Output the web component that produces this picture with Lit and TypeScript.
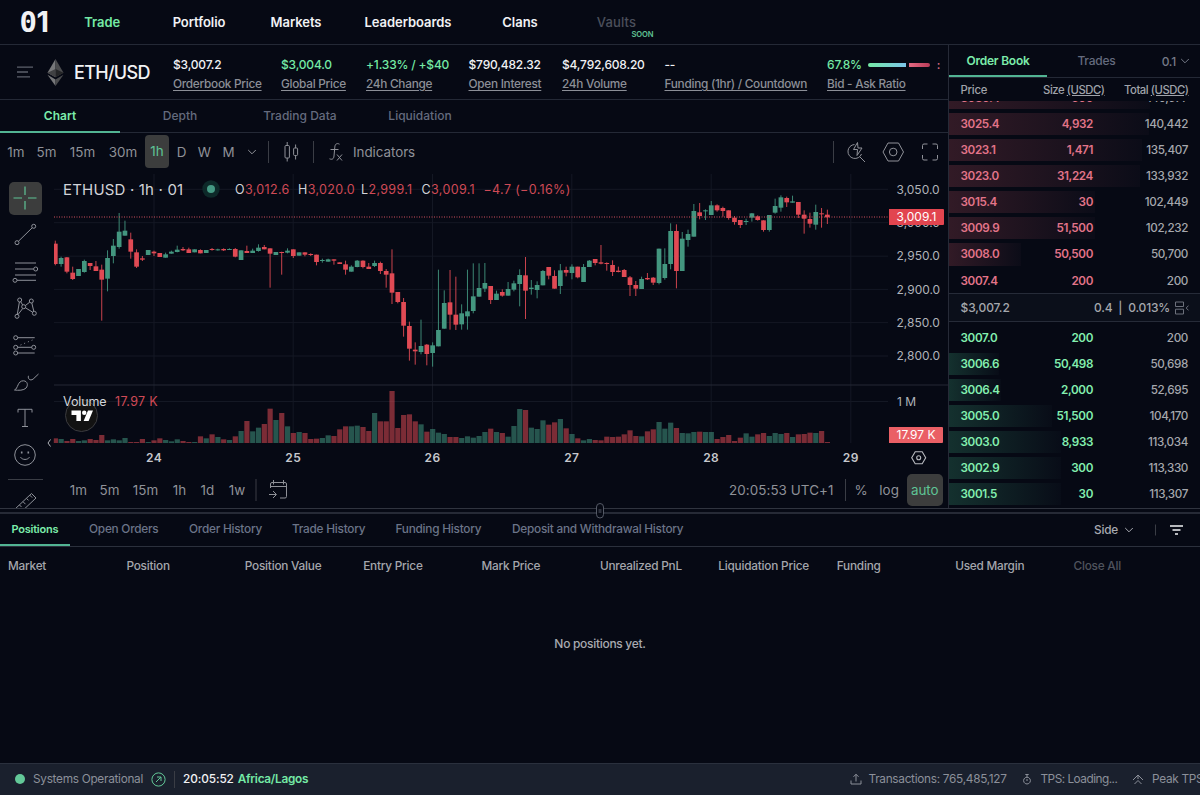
import { css, html, LitElement, svg } from 'lit';
import { customElement, property } from 'lit/decorators.js';
import { classMap } from 'lit/directives/class-map.js';
import { styleMap } from 'lit/directives/style-map.js';

// direction, body top, body bottom, high, low, volume - in thirds of a pixel
type Candle = [string, number, number, number, number, number];

const CANDLES: Candle[] = [
  ['r', 221, 282, 212, 286, 14], ['g', 264, 282, 260, 290, 12], ['r', 262, 305, 261, 310, 6],
  ['r', 308, 327, 290, 330, 12], ['g', 297, 318, 297, 318, 6], ['g', 273, 306, 269, 308, 8],
  ['r', 279, 288, 279, 300, 12], ['r', 289, 303, 273, 303, 9], ['r', 299, 329, 284, 452, 24],
  ['g', 264, 326, 241, 364, 8], ['g', 227, 258, 207, 280, 11], ['g', 185, 231, 129, 236, 8],
  ['g', 182, 197, 152, 197, 15], ['r', 208, 245, 188, 266, 3], ['r', 247, 290, 238, 294, 3],
  ['r', 265, 269, 258, 273, 12], ['g', 240, 255, 240, 255, 3], ['r', 245, 250, 242, 258, 8],
  ['r', 249, 261, 249, 261, 14], ['g', 253, 263, 248, 263, 9], ['g', 245, 251, 242, 251, 5],
  ['g', 239, 246, 227, 247, 11], ['r', 237, 241, 231, 243, 6], ['r', 238, 249, 233, 249, 3],
  ['g', 238, 247, 238, 247, 3], ['r', 240, 250, 238, 250, 20], ['g', 240, 249, 240, 249, 14],
  ['r', 237, 240, 234, 242, 26], ['g', 238, 241, 236, 242, 18], ['r', 237, 241, 235, 243, 11],
  ['g', 237, 240, 235, 240, 9], ['r', 237, 260, 234, 262, 20], ['g', 241, 270, 241, 270, 36],
  ['r', 243, 249, 227, 249, 66], ['g', 242, 249, 236, 249, 35], ['g', 233, 243, 223, 245, 46],
  ['r', 231, 238, 225, 238, 57], ['r', 235, 251, 235, 353, 103], ['g', 246, 255, 246, 255, 69],
  ['r', 246, 249, 245, 314, 90], ['g', 242, 248, 235, 250, 50], ['r', 238, 258, 238, 264, 30],
  ['g', 247, 257, 247, 257, 33], ['r', 247, 254, 247, 259, 30], ['r', 252, 255, 250, 258, 12],
  ['r', 254, 276, 254, 286, 13], ['g', 270, 273, 266, 278, 15], ['g', 268, 275, 266, 275, 23],
  ['r', 268, 272, 268, 284, 21], ['r', 277, 282, 277, 282, 41], ['r', 283, 299, 272, 314, 50],
  ['g', 290, 305, 286, 305, 50], ['g', 272, 291, 270, 292, 52], ['r', 272, 291, 271, 295, 48],
  ['r', 290, 297, 279, 297, 36], ['g', 279, 288, 272, 291, 90], ['r', 279, 303, 275, 312, 65],
  ['r', 303, 314, 297, 353, 65], ['r', 310, 368, 238, 402, 156], ['r', 366, 396, 366, 400, 45],
  ['r', 396, 467, 384, 500, 84], ['r', 468, 536, 455, 572, 86], ['r', 539, 544, 517, 584, 65],
  ['g', 528, 546, 449, 553, 56], ['r', 524, 552, 522, 586, 34], ['g', 526, 549, 517, 590, 42],
  ['g', 480, 529, 299, 529, 31], ['g', 399, 476, 361, 476, 27], ['r', 397, 434, 300, 479, 18],
  ['r', 434, 464, 320, 480, 18], ['g', 430, 463, 403, 479, 15], ['g', 424, 439, 299, 479, 20],
  ['g', 379, 423, 280, 430, 16], ['g', 354, 380, 280, 380, 21], ['g', 339, 356, 279, 366, 33],
  ['r', 348, 390, 348, 402, 43], ['g', 371, 390, 362, 390, 33], ['r', 366, 377, 358, 380, 30],
  ['g', 357, 377, 336, 377, 19], ['g', 340, 359, 332, 364, 51], ['g', 315, 342, 298, 409, 102],
  ['r', 316, 362, 261, 447, 99], ['g', 353, 357, 330, 374, 46], ['g', 345, 360, 334, 385, 42],
  ['g', 303, 346, 300, 346, 68], ['r', 291, 317, 291, 328, 55], ['r', 318, 356, 301, 356, 62],
  ['g', 301, 348, 282, 372, 72], ['r', 300, 308, 290, 319, 44], ['g', 290, 309, 283, 328, 27],
  ['r', 290, 322, 290, 325, 14], ['g', 291, 336, 282, 336, 8], ['g', 272, 291, 270, 291, 12],
  ['r', 267, 279, 267, 286, 9], ['r', 277, 281, 225, 283, 8], ['r', 279, 282, 277, 302, 19],
  ['r', 285, 306, 271, 318, 18], ['r', 302, 306, 290, 307, 19], ['r', 300, 321, 297, 321, 26],
  ['r', 322, 345, 318, 378, 38], ['r', 345, 356, 333, 378, 21], ['g', 327, 357, 320, 357, 20],
  ['r', 324, 328, 309, 330, 35], ['r', 323, 338, 321, 345, 41], ['g', 236, 339, 236, 343, 63],
  ['g', 282, 324, 235, 329, 43], ['g', 183, 282, 160, 298, 61], ['r', 183, 303, 163, 355, 45],
  ['g', 206, 303, 186, 303, 30], ['g', 192, 210, 179, 230, 29], ['g', 123, 200, 102, 200, 33],
  ['r', 127, 138, 99, 148, 34], ['g', 121, 124, 118, 150, 33], ['g', 106, 135, 93, 135, 33],
  ['r', 106, 121, 103, 125, 12], ['r', 114, 123, 110, 140, 18], ['r', 121, 144, 121, 149, 24],
  ['r', 143, 156, 138, 164, 6], ['r', 150, 165, 150, 174, 16], ['g', 153, 156, 146, 165, 29],
  ['g', 130, 143, 129, 155, 19], ['r', 139, 150, 136, 152, 26], ['r', 151, 180, 151, 185, 30],
  ['g', 135, 180, 135, 185, 21], ['g', 108, 128, 86, 131, 30], ['g', 82, 113, 76, 125, 27],
  ['r', 84, 97, 80, 111, 30], ['g', 94, 98, 77, 98, 18], ['r', 96, 134, 96, 144, 26],
  ['r', 134, 146, 121, 191, 27], ['r', 147, 161, 128, 173, 31], ['g', 126, 164, 104, 179, 30],
  ['r', 130, 133, 114, 173, 36], ['r', 134, 142, 119, 162, 3],
];

const STEP = 5.805;
const FIRST_X = 3.3;
const VOLUME_BASE = 273;

const PRICE_LABELS: [string, number][] = [
  ['3,050.0', 19.3],
  ['3,000.0', 52.7],
  ['2,950.0', 86.2],
  ['2,900.0', 119.4],
  ['2,850.0', 152.6],
  ['2,800.0', 186],
];

const DAYS: [string, number][] = [
  ['24', 102],
  ['25', 241.2],
  ['26', 380.5],
  ['27', 519.8],
  ['28', 659.2],
  ['29', 798.8],
];

const chevron = html`
  <svg class="chevron" width="10" height="6" viewBox="0 0 10 6" fill="none" stroke="currentColor">
    <path d="M1.2 1 5 4.8 8.8 1" />
  </svg>
`;

/**
 * Candles, volume bars and both axes
 */
@customElement('price-chart')
export class PriceChart extends LitElement {
  static styles = css`
    :host {
      display: block;
      height: 302px;
    }

    svg {
      display: block;
      font-family: Inter, sans-serif;
      font-size: 12px;
      letter-spacing: 0;
    }

    .grid {
      stroke: #141824;
    }

    .pane {
      stroke: #242934;
    }

    .axis {
      fill: #b0b3b9;
    }

    .day {
      fill: #c6c8cd;
      font-weight: 600;
      font-size: 12px;
      letter-spacing: 0.4px;
    }

    .g {
      fill: #43967f;
      stroke: #43967f;
    }

    .r {
      fill: #e04a54;
      stroke: #e04a54;
    }

    .body {
      stroke: none;
    }

    .volume {
      stroke: none;
      opacity: 0.54;
    }

    .title {
      fill: #d2d4d9;
      font-size: 15px;
      letter-spacing: 0.18px;
    }

    .key {
      fill: #d2d4d9;
    }

    .value {
      fill: #cf4a56;
    }

    .legend {
      font-size: 12.5px;
      letter-spacing: 0.35px;
    }

    .study {
      font-size: 12.5px;
      letter-spacing: -0.1px;
    }

    .tag {
      fill: #fff;
    }
  `;

  private renderCandle([dir, top, bottom, high, low, volume]: Candle, i: number) {
    const x = FIRST_X + i * STEP;
    const left = Math.max(x - 2.35, 2);
    const width = x + 2.35 - left;
    return svg`
      <rect class="volume ${dir}" x=${left - 0.2} y=${VOLUME_BASE - volume / 3} width=${width + 0.5} height=${volume / 3} />
      <path class=${dir} stroke-width="0.9" d="M${x} ${high / 3}V${low / 3}" />
      <rect class="body ${dir}" x=${left} y=${top / 3} width=${width} height=${(bottom - top) / 3} />
    `;
  }

  render() {
    return html`
      <svg width="896" height="302" viewBox="0 0 896 302">
        ${PRICE_LABELS.map(([, y]) => svg`<path class="grid" d="M2 ${y}H836" />`)}
        <path class="grid" d="M2 231.5H836" />
        ${DAYS.map(([, x]) => svg`<path class="grid" d="M${x} 4V273" />`)}
        <path class="pane" d="M2 215H896" />
        ${CANDLES.map((c, i) => this.renderCandle(c, i))}
        <path d="M2 47H836" stroke="#d0525c" stroke-dasharray="1 1.5" />

        <text class="title" x="11" y="24.8">ETHUSD · 1h · 01</text>
        <circle cx="159" cy="19" r="8.7" fill="#0d2929" />
        <circle cx="159" cy="19" r="4" fill="#459a84" />
        <g class="legend">
          <text class="key" x="183" y="24">O<tspan class="value">3,012.6</tspan></text>
          <text class="key" x="246" y="24">H<tspan class="value">3,020.0</tspan></text>
          <text class="key" x="309" y="24">L<tspan class="value">2,999.1</tspan></text>
          <text class="key" x="369.5" y="24">C<tspan class="value">3,009.1</tspan></text>
          <text class="value" x="431.5" y="24">−4.7 (−0.16%)</text>
        </g>

        <circle cx="29.5" cy="245.5" r="16" fill="#121212" stroke="#3b3b3f" />
        <path d="M19.5 240.5h9.4v10.6h-4.5v-6.2h-4.9zM36 240.5h5l-4.4 10.6h-5z" fill="#fff" />
        <circle cx="32.2" cy="242.7" r="2.2" fill="#fff" />
        <text class="key study" x="11" y="236">Volume</text>
        <text class="value legend" x="63" y="236">17.97 K</text>

        ${PRICE_LABELS.map(([label, y]) => svg`<text class="axis" x="844.5" y=${y + 4.2}>${label}</text>`)}
        <text class="axis" x="845" y="236">1 M</text>
        <path d="M837 39h54q1 0 1 1v14q0 1-1 1h-54z" fill="#e2454f" />
        <text class="tag" x="844.5" y="51.2">3,009.1</text>
        <path d="M837 257h53q1 0 1 1v14q0 1-1 1h-53z" fill="#ea5f65" />
        <text class="tag" x="844.5" y="269.2">17.97 K</text>

        ${DAYS.map(([day, x]) => svg`<text class="day" x=${x} y="292.2" text-anchor="middle">${day}</text>`)}
        <g fill="none" stroke="#b9bbc0" stroke-width="1.1">
          <path d="M863.2 281.7h7l3.5 6-3.5 6h-7l-3.5-6z" />
          <circle cx="866.7" cy="287.7" r="2" />
        </g>
      </svg>
    `;
  }
}

interface Level {
  price: string;
  size: string;
  total: string;
  depth: number;
}

const level = (price: string, size: string, total: string, depth: number): Level => ({ price, size, total, depth });

const ASKS = [
  level('3030.4', '500', '140,977', 201),
  level('3025.4', '4,932', '140,442', 200),
  level('3023.1', '1,471', '135,407', 193),
  level('3023.0', '31,224', '133,932', 191),
  level('3015.4', '30', '102,449', 146),
  level('3009.9', '51,500', '102,232', 146),
  level('3008.0', '50,500', '50,700', 72),
  level('3007.4', '200', '200', 0),
];

const BIDS = [
  level('3007.0', '200', '200', 0),
  level('3006.6', '50,498', '50,698', 50),
  level('3006.4', '2,000', '52,695', 52),
  level('3005.0', '51,500', '104,170', 103),
  level('3003.0', '8,933', '113,034', 112),
  level('3002.9', '300', '113,330', 112),
  level('3001.5', '30', '113,307', 112),
];

/**
 * One side of the order book
 */
@customElement('book-side')
export class BookSide extends LitElement {
  static styles = css`
    :host {
      display: block;
    }

    .row {
      display: grid;
      grid-template-columns: 60px 72.5px 95px;
      align-items: center;
      height: 22.1px;
      margin-bottom: 4px;
      padding-left: 11.5px;
      font-size: 11.7px;
      font-weight: 600;
      letter-spacing: -0.38px;
      background-repeat: no-repeat;
      background-image: linear-gradient(90deg, rgb(70 190 140 / 0.22), rgb(80 120 130 / 0.03));
      color: #83efaf;
    }

    .asks {
      background-image: linear-gradient(90deg, rgb(225 95 110 / 0.2), rgb(180 110 140 / 0.03));
      color: #e27489;
    }

    .num {
      text-align: right;
    }

    .total {
      color: #a5a7ad;
      font-weight: 500;
    }
  `;

  @property({ attribute: false })
  levels: Level[] = [];

  @property({ type: Boolean })
  asks = false;

  render() {
    return this.levels.map(
      (l) => html`
        <div
          class=${classMap({ row: true, asks: this.asks })}
          style=${styleMap({ backgroundSize: `${l.depth}px 100%` })}
        >
          <span>${l.price}</span>
          <span class="num">${l.size}</span>
          <span class="num total">${l.total}</span>
        </div>
      `
    );
  }
}

/**
 * Right column: order book with asks, spread and bids
 */
@customElement('order-book')
export class OrderBook extends LitElement {
  static styles = css`
    :host {
      display: flex;
      flex-direction: column;
      box-sizing: border-box;
      width: 252px;
      height: 463px;
      border-left: 1px solid #262a37;
      font-size: 12px;
      overflow: hidden;
    }

    .tabs {
      display: grid;
      grid-template-columns: 98px 99px 1fr;
      flex: none;
      height: 32px;
      border-bottom: 1px solid #242936;
      text-align: center;
      line-height: 31px;
      font-weight: 500;
      letter-spacing: -0.22px;
      color: #646b7e;
    }

    .active {
      color: #7cecab;
      font-weight: 600;
      border-bottom: 2px solid #52b493;
      height: 30px;
    }

    .tick {
      display: flex;
      align-items: center;
      justify-content: flex-end;
      gap: 4px;
      padding-right: 10px;
      color: #757a87;
    }

    .head {
      display: grid;
      grid-template-columns: 60px 84px 84px;
      flex: none;
      height: 23px;
      padding-left: 11.5px;
      line-height: 24px;
      font-size: 11.3px;
      font-weight: 500;
      letter-spacing: -0.45px;
      color: #a0a3aa;
    }

    .head span:first-child {
      letter-spacing: -0.2px;
    }

    .num {
      text-align: right;
    }

    .asks {
      display: flex;
      flex-direction: column;
      justify-content: flex-end;
      flex: none;
      height: 192px;
      overflow: hidden;
    }

    .asks book-side {
      margin-bottom: -2.6px;
    }

    .spread {
      display: flex;
      align-items: center;
      flex: none;
      box-sizing: border-box;
      height: 29px;
      padding: 0 11px 0 11.5px;
      background: #0b0f1a;
      border-top: 1px solid #262b38;
      border-bottom: 1px solid #262b38;
      font-weight: 500;
      letter-spacing: -0.1px;
      color: #a5a7ad;
    }

    .mid {
      flex: 1;
    }

    .ratio {
      letter-spacing: -0.2px;
      margin-right: 5px;
      white-space: pre;
    }

    .bids {
      padding-top: 4.7px;
    }
  `;

  render() {
    return html`
      <div class="tabs">
        <span class="active">Order Book</span>
        <span>Trades</span>
        <span class="tick">0.1 ${chevron}</span>
      </div>
      <div class="head">
        <span>Price</span>
        <span class="num">Size <u>(USDC)</u></span>
        <span class="num">Total <u>(USDC)</u></span>
      </div>
      <div class="asks"><book-side asks .levels=${ASKS}></book-side></div>
      <div class="spread">
        <span class="mid">$3,007.2</span>
        <span class="ratio">0.4  |  0.013%</span>
        <svg width="14" height="14" viewBox="0 0 14 14" fill="none" stroke="#6c707b">
          <path d="M.5 1h8v4.5h-8zM.5 8.2h8v4.8h-8zM13.5 4.6 11.2 7l2.3 2.4" />
        </svg>
      </div>
      <div class="bids"><book-side .levels=${BIDS}></book-side></div>
    `;
  }
}

const NAV = ['Trade', 'Portfolio', 'Markets', 'Leaderboards', 'Clans'];

const STATS = [
  { value: '$3,007.2', label: 'Orderbook Price', up: false },
  { value: '$3,004.0', label: 'Global Price', up: true },
  { value: '+1.33% / +$40', label: '24h Change', up: true },
  { value: '$790,482.32', label: 'Open Interest', up: false },
  { value: '$4,792,608.20', label: '24h Volume', up: false },
  { value: '--', label: 'Funding (1hr) / Countdown', up: false },
];

const TOOLS = [
  svg`<path d="M7.4 20.3 21.3 6.7"/><circle cx="6" cy="21.7" r="2"/><circle cx="22.7" cy="5.3" r="2"/>`,
  svg`<path d="M4 5h21M4 11h18.7M4 17h21M6 22.3h19"/><circle cx="24.7" cy="11" r="2"/><circle cx="4" cy="22.3" r="2"/>`,
  svg`<path d="M8.4 8 6.3 20.3M9.7 7.7l2 3.3M11.7 14.5 7 20.6M14.3 11.6l4.4-3.4M20.8 9l2 8.3M14.5 13.8l7.1 4.4"/>
    <circle cx="8.7" cy="6" r="2"/><circle cx="20.3" cy="7" r="2"/><circle cx="12.7" cy="12.7" r="2"/>
    <circle cx="6" cy="22.3" r="2"/><circle cx="23.3" cy="19.3" r="2"/>`,
  svg`<path d="M6.7 6.7h17M6.7 16.3h14M6.7 22h17"/><path d="M9.5 14 22 8.8" stroke-dasharray="1 3"/>
    <circle cx="4.7" cy="6.7" r="2"/><circle cx="4.7" cy="16.3" r="2"/><circle cx="22.7" cy="16.3" r="2"/><circle cx="4.7" cy="22" r="2"/>`,
  svg`<path d="M3.5 22c3.6-1.3 3-9.4 9-9.2 4.2.3 4.8 4.6 2.6 7.2-2.3 2.6-7.8 2.5-11.6 2zM17.5 7.8c-1 3 1.7 5.4 4.6 3.3L27.5 6"/>`,
  svg`<path d="M7 8.5V5.3h14v3.2M14 5.3v17.2M11 22.5h6"/>`,
  svg`<circle cx="14" cy="14" r="10.3"/><path d="M9.5 16.2c2 3 7 3 9 0"/><path d="M10.7 10.5v2M17.3 10.5v2" stroke-width="1.6"/>`,
];

const BOTTOM_TABS = [
  'Positions',
  'Open Orders',
  'Order History',
  'Trade History',
  'Funding History',
  'Deposit and Withdrawal History',
];

const COLUMNS = [
  'Market',
  'Position',
  'Position Value',
  'Entry Price',
  'Mark Price',
  'Unrealized PnL',
  'Liquidation Price',
  'Funding',
  'Used Margin',
];

@customElement('app-root')
export class AppRoot extends LitElement {
  static styles = css`
    :host {
      display: flex;
      flex-direction: column;
      width: 1200px;
      height: 795px;
      overflow: hidden;
      background: #060914;
      color: #f1f2f4;
      font-family: Inter, sans-serif;
      font-size: 12px;
      white-space: nowrap;
    }

    svg {
      display: block;
      flex: none;
      overflow: visible;
    }

    header {
      display: flex;
      flex: none;
      align-items: center;
      height: 44px;
      border-bottom: 1px solid #242936;
    }

    .logo {
      display: flex;
      align-items: center;
      width: 54px;
      box-sizing: border-box;
      padding-left: 19.5px;
      font-size: 29px;
      font-weight: 700;
      line-height: 44px;
    }

    .zero {
      width: 17px;
      font-family: 'DejaVu Sans Mono', monospace;
    }

    nav {
      display: grid;
      grid-template-columns: 96.5px 97px 97px 127px 97px 96px;
      text-align: center;
      font-size: 13px;
      font-weight: 600;
      letter-spacing: -0.05px;
    }

    .green {
      color: #74e9a5;
    }

    .vaults {
      position: relative;
      color: #4b4f5b;
      font-weight: 500;
      letter-spacing: 0.15px;
    }

    .soon {
      position: absolute;
      left: 63px;
      top: 17px;
      font-size: 7.6px;
      line-height: 8px;
      font-weight: 600;
      letter-spacing: -0.1px;
      color: #60c294;
    }

    .main {
      display: flex;
      flex: none;
      height: 463px;
    }

    .market {
      width: 948px;
    }

    .stats {
      display: flex;
      height: 54px;
      border-bottom: 1px solid #242936;
      overflow: hidden;
    }

    .pair {
      display: flex;
      align-items: center;
      width: 173px;
      flex: none;
      padding-left: 17px;
      box-sizing: border-box;
      font-size: 18px;
      font-weight: 500;
      letter-spacing: -0.7px;
    }

    .eth {
      margin: 0 10px 0 14px;
    }

    .figures {
      display: grid;
      flex: none;
      grid-template-columns: 108px 85px 102.5px 93.5px 102.5px 162.5px 160px;
      padding-top: 11px;
      line-height: 18px;
      font-weight: 500;
      letter-spacing: -0.18px;
    }

    .label {
      color: #8c8f97;
      line-height: 20px;
      font-size: 11.8px;
      letter-spacing: -0.27px;
      text-decoration: underline;
      text-underline-offset: 2px;
    }

    .ratio {
      display: flex;
      align-items: center;
    }

    .bid {
      width: 38px;
      height: 4.5px;
      margin: 0 3px 0 6px;
      border-radius: 2px 0 0 2px;
      background: linear-gradient(90deg, #74e9a5, #7cc5ea);
    }

    .ask {
      width: 21px;
      height: 4.5px;
      margin-right: 7px;
      border-radius: 0 2px 2px 0;
      background: linear-gradient(90deg, #e46a83, #b93b58);
    }

    .rest {
      color: #d26a80;
    }

    .chart-tabs {
      display: grid;
      grid-template-columns: repeat(4, 120px);
      height: 32px;
      border-bottom: 1px solid #242936;
      text-align: center;
      line-height: 32px;
      font-weight: 500;
      color: #646b7e;
    }

    .selected {
      box-sizing: border-box;
      height: 33px;
      border-bottom: 2px solid #52b493;
      color: #7cecab;
      font-weight: 600;
    }

    .toolbar {
      display: flex;
      align-items: center;
      height: 37px;
      font-size: 13.4px;
      letter-spacing: 0.08px;
      color: #8f9198;
    }

    .intervals {
      display: grid;
      grid-template-columns: 32px 29px 43px 38px 30px 19px 27px 21px 26px;
      align-items: center;
      justify-items: center;
    }

    .on {
      height: 32.5px;
      border-radius: 4px;
      background: #3c3d3d;
      color: #5fc496;
      line-height: 33px;
      text-align: center;
    }

    .hour {
      width: 24px;
    }

    .indicators {
      margin-left: 1px;
      letter-spacing: -0.05px;
    }

    .sep {
      width: 1px;
      height: 21px;
      background: #3a3d45;
    }

    .footer-sep {
      height: 17px;
    }

    .space {
      flex: 1;
    }

    .work {
      display: grid;
      grid-template-columns: 52px 896px;
      grid-template-rows: 302px 36px;
    }

    .tools {
      grid-row: 1 / 3;
      height: 338px;
      overflow: hidden;
      color: #8e9199;
      position: relative;
    }

    .tool {
      display: flex;
      align-items: center;
      justify-content: center;
      width: 50px;
      height: 36.7px;
    }

    .tool:first-child {
      padding-top: 10px;
    }

    .cross {
      display: flex;
      align-items: center;
      justify-content: center;
      width: 33px;
      height: 33px;
      border-radius: 5px;
      background: #3c3d3d;
      color: #5fc496;
    }

    .tool-line {
      height: 1px;
      width: 35px;
      margin: 5px 0 4px 8px;
      background: #3a3d45;
    }

    .collapse {
      position: absolute;
      left: 46.5px;
      top: 269px;
      color: #b0b2b8;
    }

    .ranges {
      display: grid;
      grid-template-columns: 29px 33px 39px 29px 27px 32px;
      padding-left: 12px;
      text-align: center;
    }

    .bottom-bar {
      height: 36px;
    }

    .auto {
      width: 35.5px;
      margin: 0 5.5px 0 8px;
      border-radius: 5px;
      letter-spacing: -0.1px;
    }

    .splitter {
      position: relative;
      flex: none;
      height: 3px;
      border-top: 1px solid #30343f;
      border-bottom: 2px solid #262a36;
    }

    .grip {
      position: absolute;
      left: 596px;
      top: -6px;
    }

    .panel-tabs {
      display: flex;
      flex: none;
      align-items: center;
      height: 32px;
      border-bottom: 1px solid #2b303c;
      font-weight: 500;
      font-size: 11.8px;
      letter-spacing: -0.23px;
      color: #6b7488;
    }

    .panel-list {
      display: grid;
      grid-template-columns: 89px 100px 103px 103.5px 116.5px 180px;
      line-height: 31px;
    }

    .first {
      box-sizing: border-box;
      width: 70px;
      height: 32px;
      padding-left: 11.5px;
      line-height: 31px;
      font-size: 11px;
      font-weight: 600;
      color: #7cecab;
      border-bottom: 2px solid #52b493;
    }

    .side {
      display: flex;
      align-items: center;
      gap: 6px;
      color: #a8aab1;
    }

    .columns {
      display: grid;
      flex: none;
      grid-template-columns: repeat(10, 118.4px);
      padding: 0 8px;
      line-height: 39px;
      font-size: 11.8px;
      font-weight: 500;
      letter-spacing: -0.22px;
      color: #a4a6ac;
    }

    .dim {
      color: #4f535d;
    }

    .empty {
      display: flex;
      flex: 1;
      justify-content: center;
      padding-top: 50px;
      font-weight: 500;
      letter-spacing: -0.3px;
      color: #a8aab0;
    }

    footer {
      display: flex;
      flex: none;
      align-items: center;
      height: 32px;
      padding-bottom: 1px;
      box-sizing: border-box;
      border-top: 1px solid #2a303d;
      background: #1a202d;
      font-size: 11.8px;
      letter-spacing: -0.28px;
      color: #8c909a;
    }

    .status-dot {
      width: 10px;
      height: 10px;
      margin: 0 8px 0 15px;
      border-radius: 50%;
      background: #63c898;
    }

    .link {
      margin: 0 8px;
    }

    .clock {
      margin: 0 4px 0 8px;
      color: #f1f2f4;
      font-weight: 500;
      letter-spacing: -0.1px;
    }

    .zone {
      font-weight: 600;
    }

    .metrics {
      display: grid;
      grid-template-columns: 19px 152.5px 19.5px 91.5px 20px 48px;
      align-items: center;
    }

    .tps {
      letter-spacing: -0.5px;
    }
  `;

  private renderHeader() {
    return html`
      <header>
        <div class="logo"><span class="zero">0</span><span>1</span></div>
        <nav>
          ${NAV.map((item, i) => html`<span class=${classMap({ green: i === 0 })}>${item}</span>`)}
          <span class="vaults">Vaults<span class="soon">SOON</span></span>
        </nav>
      </header>
    `;
  }

  private renderStats() {
    return html`
      <div class="stats">
        <div class="pair">
          <svg width="16" height="12" viewBox="0 0 16 12" stroke="#5c606b" stroke-width="1.3">
            <path d="M0 1.2h16M0 6h11M0 10.8h13" />
          </svg>
          <svg class="eth" width="17" height="27" viewBox="0 0 17 27">
            <path d="M8.5 0 .5 13.8l8 4.5z" fill="#77787a" />
            <path d="m8.5 0 8 13.8-8 4.5z" fill="#4b4c4e" />
            <path d="m8.5 10 8 3.8-8 4.5z" fill="#242527" />
            <path d="m8.5 10-8 3.8 8 4.5z" fill="#404143" />
            <path d="m.5 15.8 8 4.6V27z" fill="#77787a" />
            <path d="m16.5 15.8-8 4.6V27z" fill="#4b4c4e" />
          </svg>
          ETH/USD
        </div>
        <div class="figures">
          ${STATS.map(
            (s) => html`
              <div>
                <div class=${classMap({ green: s.up })}>${s.value}</div>
                <div class="label">${s.label}</div>
              </div>
            `
          )}
          <div>
            <div class="ratio">
              <span class="green">67.8%</span><span class="bid"></span><span class="ask"></span>
              <span class="rest">:</span>
            </div>
            <div class="label">Bid - Ask Ratio</div>
          </div>
        </div>
      </div>
    `;
  }

  private renderToolbar() {
    return html`
      <div class="toolbar">
        <div class="intervals">
          <span>1m</span><span>5m</span><span>15m</span><span>30m</span>
          <span class="on hour">1h</span>
          <span>D</span><span>W</span><span>M</span>${chevron}
        </div>
        <svg width="87" height="22" viewBox="0 0 87 22" fill="none" stroke="currentColor">
          <path d="M3.5 0v22M48.5 0v22" stroke="#3a3d45" />
          <rect x="20" y="4.5" width="4.4" height="12.5" rx="1" />
          <rect x="28.6" y="7" width="4" height="7.5" rx="1" />
          <path d="M22.2 1v3.5M22.2 17v3.5M30.6 3.5V7M30.6 14.5v4" />
          <path d="M74.5 3.2c-3-1.6-4.5.2-4.7 3L69 15c-.3 3.2-2 3.8-4.5 2.8M65.5 8.5h8M72 13.5l5 6M77 13.5l-5 6" />
        </svg>
        <span class="indicators">Indicators</span>
        <span class="space"></span>
        <svg width="114" height="22" viewBox="0 0 114 22" fill="none" stroke="currentColor">
          <path d="M-.5 0v22" stroke="#3a3d45" />
          <path d="M20.500 3.500a7 7 0 1 0 7 9.500M26 16l5 5M23.500 1.500 19.500 8.500h4l-.5 6 5-7.500h-4z" />
          <path d="M54 2h10.500l5 9-5 9H54l-5-9z" />
          <circle cx="59.2" cy="11" r="3.8" />
          <path d="M88.500 8V4.500a1.500 1.500 0 0 1 1.500-1.500h3.500M98.500 3h3.500a1.500 1.500 0 0 1 1.500 1.500V8M103.500 14v3.500a1.500 1.500 0 0 1-1.500 1.500h-3.500M93.500 19H90a1.500 1.500 0 0 1-1.500-1.500V14" />
        </svg>
      </div>
    `;
  }

  private renderTools() {
    return html`
      <div class="tools">
        <div class="tool">
          <span class="cross">
            <svg width="28" height="28" viewBox="0 0 28 28" stroke="currentColor" stroke-width="1.2">
              <path d="M14 2.500v8.500M14 17v8.500M2.500 14H11M17 14h8.500" />
            </svg>
          </span>
        </div>
        ${TOOLS.map(
          (icon) => html`
            <div class="tool">
              <svg width="28" height="28" viewBox="0 0 28 28" fill="none" stroke="currentColor">${icon}</svg>
            </div>
          `
        )}
        <div class="tool-line"></div>
        <div class="tool">
          <svg width="28" height="28" viewBox="0 0 28 28" fill="none" stroke="currentColor">
            <path d="m3.500 21.500 17-16 4.500 4.500-17 16zM8.500 17l2 2M12 13.700l2.500 2.500M15.500 10.400l2 2M18.800 7.200l2.400 2.400" />
          </svg>
        </div>
        <svg class="collapse" width="5" height="8" viewBox="0 0 5 8" fill="none" stroke="currentColor">
          <path d="M3.500.5 1 4l2.500 3.500" />
        </svg>
      </div>
    `;
  }

  private renderBottomBar() {
    return html`
      <div class="toolbar bottom-bar">
        <div class="ranges">
          <span>1m</span><span>5m</span><span>15m</span><span>1h</span><span>1d</span><span>1w</span>
        </div>
        <svg width="40" height="22" viewBox="0 0 40 22" fill="none" stroke="currentColor">
          <path d="M3 0v22" stroke="#3a3d45" />
          <path d="M17.500 9V5a1.500 1.500 0 0 1 1.500-1.500h13a1.500 1.500 0 0 1 1.500 1.500v12.500a1.500 1.500 0 0 1-1.500 1.500h-5M17.500 7.500h16M20.500 1v4.500M30.500 1v4.500M16 15.500h7M20 12l3.500 3.500L20 19" />
        </svg>
        <span class="space"></span>
        <span>20:05:53 UTC+1</span>
        <svg width="21" height="22" viewBox="0 0 21 22" stroke="#3a3d45"><path d="M11.500 0v22" /></svg>
        <span>%&nbsp;&nbsp; log</span>
        <span class="on auto">auto</span>
      </div>
    `;
  }

  private renderPanel() {
    return html`
      <div class="panel-tabs">
        <div class="panel-list">
          ${BOTTOM_TABS.map((tab, i) => html`<span class=${classMap({ first: i === 0 })}>${tab}</span>`)}
        </div>
        <span class="space"></span>
        <span class="side">Side ${chevron}</span>
        <svg width="66" height="14" viewBox="0 0 66 14">
          <path d="M21.500 1.500v11" stroke="#3a3d45" />
          <path d="M36 3h13M38.500 7h8M41 11h3" stroke="#f1f2f4" stroke-width="1.4" />
        </svg>
      </div>
      <div class="columns">
        ${COLUMNS.map((c) => html`<span>${c}</span>`)}
        <span class="dim">Close All</span>
      </div>
      <div class="empty">No positions yet.</div>
    `;
  }

  private renderFooter() {
    return html`
      <footer>
        <span class="status-dot"></span>
        <span>Systems Operational</span>
        <svg class="link" width="15" height="15" viewBox="0 0 15 15" fill="none" stroke="#63c898">
          <circle cx="7.5" cy="7.5" r="6.6" />
          <path d="m5 10 4.800-4.800M6 5h4v4" />
        </svg>
        <span class="sep footer-sep"></span>
        <span class="clock">20:05:52</span>
        <span class="green zone">Africa/Lagos</span>
        <span class="space"></span>
        <div class="metrics">
          <svg width="12" height="12" viewBox="0 0 12 12" fill="none" stroke="currentColor">
            <path d="M1 7.500V11h10V7.500M6 8.500V1.500M3.500 3.800 6 1.200l2.500 2.600" />
          </svg>
          <span>Transactions: 765,485,127</span>
          <svg width="12" height="12" viewBox="0 0 12 12" fill="none" stroke="currentColor">
            <path d="M6 4.200a3.400 3.400 0 1 0 .01 0M6 4.500V2M4.300 1.500h3.400M6 6v2" />
          </svg>
          <span class="tps">TPS: Loading...</span>
          <svg width="12" height="12" viewBox="0 0 12 12" fill="none" stroke="currentColor">
            <path d="m1 7 5-5 5 5M6 2v4M2.500 11 6 7.500 9.500 11" />
          </svg>
          <span>Peak TPS</span>
        </div>
      </footer>
    `;
  }

  render() {
    return html`
      ${this.renderHeader()}
      <div class="main">
        <div class="market">
          ${this.renderStats()}
          <div class="chart-tabs">
            <span class="selected">Chart</span><span>Depth</span><span>Trading Data</span><span>Liquidation</span>
          </div>
          ${this.renderToolbar()}
          <div class="work">
            ${this.renderTools()}
            <price-chart></price-chart>
            ${this.renderBottomBar()}
          </div>
        </div>
        <order-book></order-book>
      </div>
      <div class="splitter">
        <svg class="grip" width="8" height="16" viewBox="0 0 8 16" fill="#060914" stroke="#555a66">
          <rect x=".5" y=".5" width="7" height="14.500" rx="3.500" />
          <path d="M2.500 7h3M2.500 9h3" />
        </svg>
      </div>
      ${this.renderPanel()} ${this.renderFooter()}
    `;
  }
}

declare global {
  interface HTMLElementTagNameMap {
    'app-root': AppRoot;
    'price-chart': PriceChart;
    'order-book': OrderBook;
    'book-side': BookSide;
  }
}
